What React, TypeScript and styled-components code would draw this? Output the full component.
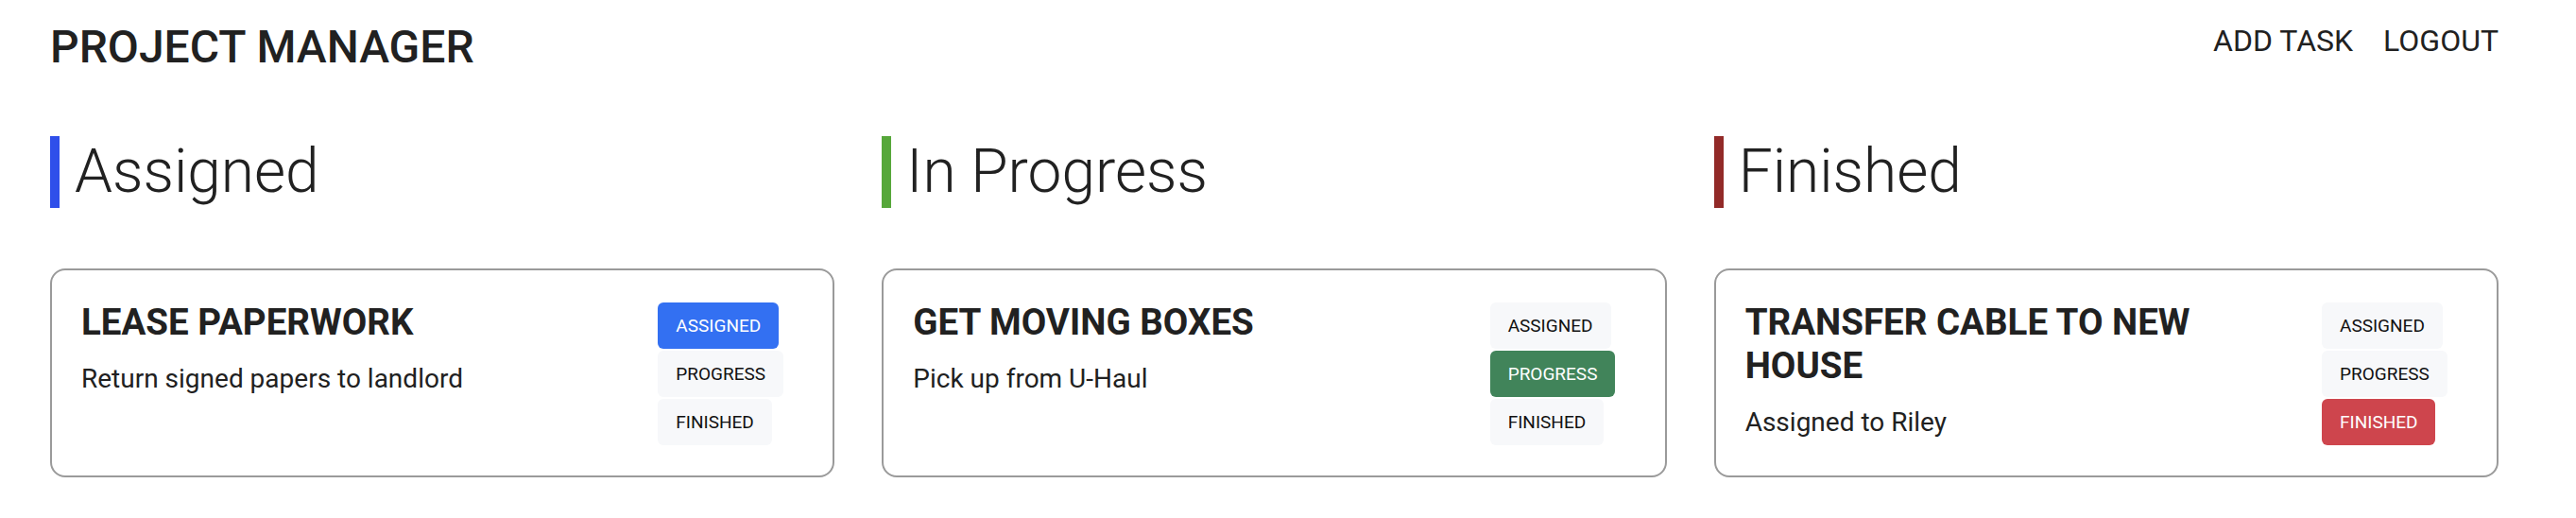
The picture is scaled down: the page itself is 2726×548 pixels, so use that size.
import React from "react";
import styled, { createGlobalStyle } from "styled-components";

const GlobalStyle = createGlobalStyle`
  html, body {
    margin: 0;
    padding: 0;
    background: #ffffff;
  }
  body {
    font-family: Roboto, "Noto Sans", "Liberation Sans", sans-serif;
    color: #212121;
  }
  * { box-sizing: border-box; }
`;

type Status = "assigned" | "progress" | "finished";

const STATUS_COLORS: Record<Status, string> = {
  assigned: "#3370f2",
  progress: "#41845a",
  finished: "#ce454d",
};

const BAR_COLORS: Record<Status, string> = {
  assigned: "#2f4fea",
  progress: "#56a73a",
  finished: "#922a28",
};

const Page = styled.div`
  padding: 22px 82px 40px 53px;
`;

const Header = styled.header`
  display: flex;
  align-items: flex-start;
  justify-content: space-between;
`;

const Brand = styled.h1`
  margin: 0;
  font-size: 48px;
  line-height: 56px;
  font-weight: 500;
  color: #212121;
  letter-spacing: 0;
`;

const Nav = styled.nav`
  display: flex;
  gap: 32px;
  margin-top: 2px;
`;

const NavLink = styled.a`
  font-size: 32px;
  line-height: 38px;
  font-weight: 400;
  color: #212121;
  text-decoration: none;
  text-transform: uppercase;
  cursor: pointer;
`;

const Board = styled.main`
  display: grid;
  grid-template-columns: repeat(3, 1fr);
  column-gap: 50px;
  margin-top: 66px;
`;

const Column = styled.section`
  display: flex;
  flex-direction: column;
  min-width: 0;
`;

const ColumnTitle = styled.h2<{ $status: Status }>`
  margin: 0;
  border-left: 10px solid ${(p) => BAR_COLORS[p.$status]};
  padding-left: 16px;
  font-size: 64px;
  line-height: 76px;
  font-weight: 300;
  color: #212121;
`;

const CardList = styled.div`
  display: flex;
  flex-direction: column;
  gap: 24px;
  margin-top: 64px;
`;

const Card = styled.article`
  display: flex;
  align-items: flex-start;
  border: 2px solid #9a9a9a;
  border-radius: 16px;
  padding: 31px 33px 32px 31px;
  background: #fff;
`;

const CardBody = styled.div`
  flex: 1;
  min-width: 0;
  margin-right: 49px;
`;

const CardTitle = styled.h3`
  margin: 1px 0 0;
  font-size: 38.5px;
  line-height: 46px;
  font-weight: 700;
  color: #212121;
  text-transform: uppercase;
`;

const CardText = styled.p`
  margin: 17px 0 0;
  font-size: 28px;
  line-height: 40px;
  font-weight: 400;
  color: #212121;
`;

const StatusStack = styled.div`
  flex: 0 0 152px;
  display: flex;
  flex-direction: column;
  align-items: flex-start;
  gap: 2px;
  margin-top: 3px;
`;

const StatusButton = styled.button<{ $active: boolean; $status: Status }>`
  height: 49px;
  padding: 0 19px;
  border: none;
  border-radius: 6px;
  font-family: Roboto, "Noto Sans", "Liberation Sans", sans-serif;
  font-size: 19px;
  line-height: 49px;
  font-weight: 400;
  text-transform: uppercase;
  cursor: pointer;
  background: ${(p) => (p.$active ? STATUS_COLORS[p.$status] : "#f7f8fa")};
  color: ${(p) => (p.$active ? "#ffffff" : "#111111")};
`;

type Task = { title: string; text: string; status: Status };

const columns: { status: Status; label: string; tasks: Task[] }[] = [
  {
    status: "assigned",
    label: "Assigned",
    tasks: [
      { title: "Lease Paperwork", text: "Return signed papers to landlord", status: "assigned" },
    ],
  },
  {
    status: "progress",
    label: "In Progress",
    tasks: [{ title: "Get Moving Boxes", text: "Pick up from U-Haul", status: "progress" }],
  },
  {
    status: "finished",
    label: "Finished",
    tasks: [
      { title: "Transfer cable to new house", text: "Assigned to Riley", status: "finished" },
    ],
  },
];

const buttons: { status: Status; label: string }[] = [
  { status: "assigned", label: "Assigned" },
  { status: "progress", label: "Progress" },
  { status: "finished", label: "Finished" },
];

function TaskCard({ task }: { task: Task }) {
  return (
    <Card>
      <CardBody>
        <CardTitle>{task.title}</CardTitle>
        <CardText>{task.text}</CardText>
      </CardBody>
      <StatusStack>
        {buttons.map((b) => (
          <StatusButton key={b.status} $status={b.status} $active={b.status === task.status}>
            {b.label}
          </StatusButton>
        ))}
      </StatusStack>
    </Card>
  );
}

export default function App() {
  return (
    <>
      <GlobalStyle />
      <Page>
        <Header>
          <Brand>PROJECT MANAGER</Brand>
          <Nav>
            <NavLink>Add Task</NavLink>
            <NavLink>Logout</NavLink>
          </Nav>
        </Header>
        <Board>
          {columns.map((c) => (
            <Column key={c.status}>
              <ColumnTitle $status={c.status}>{c.label}</ColumnTitle>
              <CardList>
                {c.tasks.map((t) => (
                  <TaskCard key={t.title} task={t} />
                ))}
              </CardList>
            </Column>
          ))}
        </Board>
      </Page>
    </>
  );
}
